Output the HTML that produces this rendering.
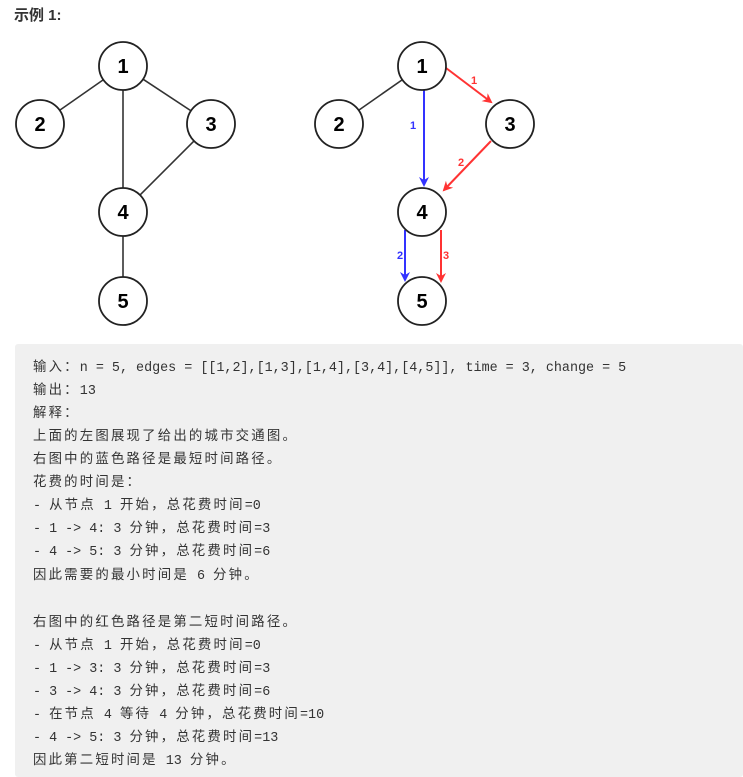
<!DOCTYPE html>
<html><head><meta charset="utf-8"><style>
body{margin:0;background:#fff;width:743px;height:777px;overflow:hidden;position:relative;font-family:"Liberation Sans","Noto Sans CJK SC",sans-serif}
.t{position:absolute;left:14px;top:4px;font-size:15px;font-weight:bold;color:#333}
svg{position:absolute;left:0;top:0}
.pre{position:absolute;left:15px;top:344px;width:728px;height:433px;background:#f0f0f0;border-radius:3px}
.pre div{position:absolute;left:18px;font-family:"Liberation Mono","Noto Sans CJK SC",monospace;font-size:13.4px;color:#333;white-space:pre;line-height:16px}
.c{letter-spacing:2.2px}
</style></head><body>
<div class="t">示例 1:</div>
<svg width="743" height="340" font-family="Liberation Sans,sans-serif" font-weight="bold" font-size="20">
<defs>
<marker id="ab" markerWidth="10" markerHeight="10" refX="8" refY="5" orient="auto" markerUnits="userSpaceOnUse"><path d="M0,0 L10,5 L0,10 L3,5z" fill="#3333ff"/></marker>
<marker id="ar" markerWidth="10" markerHeight="10" refX="8" refY="5" orient="auto" markerUnits="userSpaceOnUse"><path d="M0,0 L10,5 L0,10 L3,5z" fill="#ff3333"/></marker>
</defs>
<g stroke="#333" stroke-width="1.6">
<line x1="123" y1="66" x2="40" y2="124"/><line x1="123" y1="66" x2="211" y2="124"/><line x1="123" y1="66" x2="123" y2="212"/><line x1="211" y1="124" x2="123" y2="212"/><line x1="123" y1="212" x2="123" y2="301"/>
<line x1="422" y1="66" x2="339" y2="124"/>
</g>
<g stroke-width="2" fill="none">
<line x1="424" y1="90" x2="424" y2="185" stroke="#3333ff" marker-end="url(#ab)"/>
<line x1="446" y1="68" x2="491" y2="102" stroke="#ff3333" marker-end="url(#ar)"/>
<line x1="491" y1="141" x2="444" y2="190" stroke="#ff3333" marker-end="url(#ar)"/>
<line x1="405" y1="230" x2="405" y2="280" stroke="#3333ff" marker-end="url(#ab)"/>
<line x1="441" y1="230" x2="441" y2="281" stroke="#ff3333" marker-end="url(#ar)"/>
</g>
<g stroke="#222" stroke-width="1.8" fill="#fff">
<circle cx="123" cy="66" r="24"/><circle cx="40" cy="124" r="24"/><circle cx="211" cy="124" r="24"/><circle cx="123" cy="212" r="24"/><circle cx="123" cy="301" r="24"/>
<circle cx="422" cy="66" r="24"/><circle cx="339" cy="124" r="24"/><circle cx="510" cy="124" r="24"/><circle cx="422" cy="212" r="24"/><circle cx="422" cy="301" r="24"/>
</g>
<g text-anchor="middle" fill="#000">
<text x="123" y="73">1</text><text x="40" y="131">2</text><text x="211" y="131">3</text><text x="123" y="219">4</text><text x="123" y="308">5</text>
<text x="422" y="73">1</text><text x="339" y="131">2</text><text x="510" y="131">3</text><text x="422" y="219">4</text><text x="422" y="308">5</text>
</g>
<g font-size="11" text-anchor="middle">
<text x="413" y="129" fill="#3333ff">1</text><text x="474" y="84" fill="#ff3333">1</text><text x="461" y="166" fill="#ff3333">2</text><text x="400" y="259" fill="#3333ff">2</text><text x="446" y="259" fill="#ff3333">3</text>
</g>
</svg>
<div class="pre">
<div style="top:17px"><span class="c">输入：</span>n = 5, edges = [[1,2],[1,3],[1,4],[3,4],[4,5]], time = 3, change = 5</div>
<div style="top:40px"><span class="c">输出：</span>13</div>
<div style="top:63px"><span class="c">解释：</span></div>
<div style="top:86px"><span class="c">上面的左图展现了给出的城市交通图。</span></div>
<div style="top:109px"><span class="c">右图中的蓝色路径是最短时间路径。</span></div>
<div style="top:132px"><span class="c">花费的时间是：</span></div>
<div style="top:155px">- <span class="c">从节点</span> 1 <span class="c">开始，总花费时间</span>=0</div>
<div style="top:178px">- 1 -&gt; 4: 3 <span class="c">分钟，总花费时间</span>=3</div>
<div style="top:201px">- 4 -&gt; 5: 3 <span class="c">分钟，总花费时间</span>=6</div>
<div style="top:225px"><span class="c">因此需要的最小时间是</span> 6 <span class="c">分钟。</span></div>
<div style="top:272px"><span class="c">右图中的红色路径是第二短时间路径。</span></div>
<div style="top:295px">- <span class="c">从节点</span> 1 <span class="c">开始，总花费时间</span>=0</div>
<div style="top:318px">- 1 -&gt; 3: 3 <span class="c">分钟，总花费时间</span>=3</div>
<div style="top:341px">- 3 -&gt; 4: 3 <span class="c">分钟，总花费时间</span>=6</div>
<div style="top:364px">- <span class="c">在节点</span> 4 <span class="c">等待</span> 4 <span class="c">分钟，总花费时间</span>=10</div>
<div style="top:387px">- 4 -&gt; 5: 3 <span class="c">分钟，总花费时间</span>=13</div>
<div style="top:410px"><span class="c">因此第二短时间是</span> 13 <span class="c">分钟。</span></div>
</div>
</body></html>
